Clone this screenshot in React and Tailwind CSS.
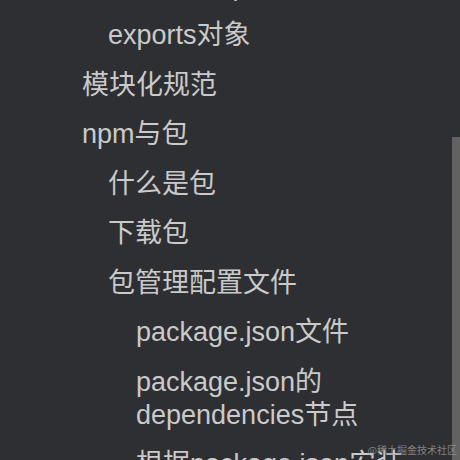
import React from "react";

const items = [
  { t: "module.exports对象", l: 2 },
  { t: "exports对象", l: 2 },
  { t: "模块化规范", l: 1 },
  { t: "npm与包", l: 1 },
  { t: "什么是包", l: 2 },
  { t: "下载包", l: 2 },
  { t: "包管理配置文件", l: 2 },
  { t: "package.json文件", l: 3 },
  { t: "package.json的dependencies节点", l: 3 },
  { t: "根据package.json安装包", l: 3 },
];

const indent = { 1: "pl-[82px]", 2: "pl-[108px]", 3: "pl-[136px]" };

export default function App() {
  return (
    <div
      className="w-[460px] h-[460px] overflow-hidden bg-[#2e2f33] flex relative"
      style={{ fontFamily: '"Liberation Sans", "Noto Sans CJK SC", sans-serif' }}
    >
      <div className="flex-1 min-w-0 pr-[30px]">
        <div className="flex flex-col gap-[16.5px] mt-[-30.5px]">
          {items.map((it, i) => (
            <div
              key={i}
              className={`${indent[it.l]} text-[27px] leading-[33px] text-[#cacaca]`}
            >
              {it.t}
            </div>
          ))}
        </div>
      </div>
      <div className="w-[8px] shrink-0 flex flex-col">
        <div className="mt-[137px] flex-1 bg-[#626262]" />
      </div>
      <div
        className="absolute right-[3px] bottom-[4px] text-[10px] leading-[12px] text-[#9a9a9a]/80"
        style={{ fontFamily: '"Noto Sans CJK SC", serif' }}
      >
        @稀土掘金技术社区
      </div>
    </div>
  );
}
